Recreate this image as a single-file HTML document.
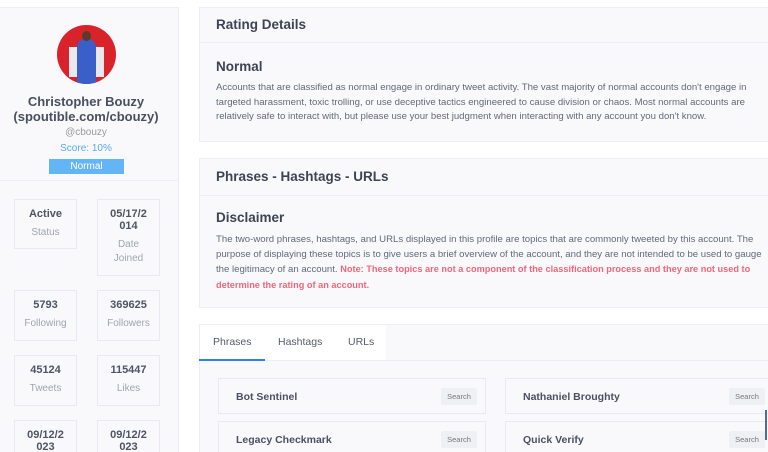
<!DOCTYPE html>
<html><head><meta charset="utf-8"><style>
*{margin:0;padding:0;box-sizing:border-box}
html,body{width:768px;height:452px;overflow:hidden}
body{background:#fff;font-family:"Liberation Sans",sans-serif;color:#5a5f6e}
#w{position:relative;width:768px;height:452px;overflow:hidden}
.a{position:absolute}
.side{left:0;top:7px;width:179px;height:445px;background:#f9f9fc;border-right:1px solid #eceef3;border-top:1px solid #eceef3}
.card{background:#f9f9fc;border:1px solid #eceef3;left:199px;width:569px;border-right:none}
.h{font-size:13.5px;color:#3e4454;font-weight:600;white-space:nowrap}
.p{font-size:9.6px;line-height:14.5px;white-space:nowrap;color:#646978}
.r{color:#f0677a;font-weight:bold;font-size:9.2px}
.stat{background:#f9f9fc;border:1px solid #e8eaf0;width:63px;text-align:center}
.stat b{display:block;font-size:11px;color:#4e5464;margin-top:8px;line-height:12px}
.stat span{display:block;font-size:10px;color:#a0a4b0;line-height:14px;margin-top:6px}
.item{background:#f9f9fc;border:1px solid #e8eaf0;height:36px}
.item .t{position:absolute;left:17px;top:12px;font-size:10.5px;font-weight:bold;color:#4a5060}
.item .s{position:absolute;right:8px;top:9px;width:36px;height:17px;background:#eef0f4;border-radius:2px;font-size:7.5px;color:#777;text-align:center;line-height:17px}
</style></head><body><div id="w">
<div class="a side"></div>
<div class="a" style="left:57px;top:25px;width:59px;height:59px;border-radius:50%;overflow:hidden;background:#d8232a">
 <div class="a" style="left:12px;top:22px;width:35px;height:30px;background:#e8e8ee"></div>
 <div class="a" style="left:20px;top:14px;width:19px;height:45px;background:#3a5fc8;border-radius:8px 8px 0 0"></div>
 <div class="a" style="left:25px;top:6px;width:9px;height:10px;background:#5a3a2a;border-radius:50%"></div>
</div>
<div class="a" style="left:0;width:172px;top:94px;text-align:center;font-size:13px;font-weight:bold;color:#4a4f5e;line-height:15px">Christopher Bouzy<br>(spoutible.com/cbouzy)</div>
<div class="a" style="left:0;width:172px;top:127px;text-align:center;font-size:10px;color:#999">@cbouzy</div>
<div class="a" style="left:0;width:172px;top:143px;text-align:center;font-size:10px;color:#5aa9f0">Score: 10%</div>
<div class="a" style="left:49px;top:159px;width:75px;height:15px;background:#64b5f6;color:#fff;font-size:10px;text-align:center;line-height:15px">Normal</div>
<div class="a" style="left:0;top:180px;width:179px;border-top:1px solid #eceef3"></div>
<div class="a stat" style="left:14px;top:199px;height:50px"><b>Active</b><span>Status</span></div>
<div class="a stat" style="left:97px;top:199px;height:77px"><b>05/17/2<br>014</b><span>Date<br>Joined</span></div>
<div class="a stat" style="left:14px;top:290px;height:51px"><b>5793</b><span>Following</span></div>
<div class="a stat" style="left:97px;top:290px;height:51px"><b>369625</b><span>Followers</span></div>
<div class="a stat" style="left:14px;top:355px;height:51px"><b>45124</b><span>Tweets</span></div>
<div class="a stat" style="left:97px;top:355px;height:51px"><b>115447</b><span>Likes</span></div>
<div class="a stat" style="left:14px;top:420px;height:32px;border-bottom:none"><b>09/12/2<br>023</b></div>
<div class="a stat" style="left:97px;top:420px;height:32px;border-bottom:none"><b>09/12/2<br>023</b></div>

<div class="a card" style="top:7px;height:135px"></div>
<div class="a h" style="left:216px;top:17px">Rating Details</div>
<div class="a" style="left:200px;top:42px;width:568px;border-top:1px solid #eceef3"></div>
<div class="a h" style="left:216px;top:59px">Normal</div>
<div class="a p" style="left:216px;top:81px">Accounts that are classified as normal engage in ordinary tweet activity. The vast majority of normal accounts don't engage in<br>targeted harassment, toxic trolling, or use deceptive tactics engineered to cause division or chaos. Most normal accounts are<br>relatively safe to interact with, but please use your best judgment when interacting with any account you don't know.</div>

<div class="a card" style="top:158px;height:150px"></div>
<div class="a h" style="left:216px;top:169px">Phrases - Hashtags - URLs</div>
<div class="a" style="left:200px;top:195px;width:568px;border-top:1px solid #eceef3"></div>
<div class="a h" style="left:216px;top:210px">Disclaimer</div>
<div class="a p" style="left:216px;top:233px">The two-word phrases, hashtags, and URLs displayed in this profile are topics that are commonly tweeted by this account. The<br>purpose of displaying these topics is to give users a brief overview of the account, and they are not intended to be used to gauge<br>the legitimacy of an account. <b class="r">Note: These topics are not a component of the classification process and they are not used to</b><br><b class="r">determine the rating of an account.</b></div>

<div class="a card" style="top:324px;height:128px;border-bottom:none"></div>
<div class="a" style="left:200px;top:325px;width:186px;height:36px;background:#fff"></div>
<div class="a" style="left:200px;top:360px;width:568px;border-top:1px solid #eceef3"></div>
<div class="a" style="left:199px;top:359px;width:66px;height:2px;background:#2f80ed"></div>
<div class="a" style="left:213px;top:336px;font-size:10.5px;color:#555b6a">Phrases</div>
<div class="a" style="left:278px;top:336px;font-size:10.5px;color:#555b6a">Hashtags</div>
<div class="a" style="left:348px;top:336px;font-size:10.5px;color:#555b6a">URLs</div>
<div class="a item" style="left:218px;top:378px;width:268px"><div class="t">Bot Sentinel</div><div class="s">Search</div></div>
<div class="a item" style="left:505px;top:378px;width:263px;border-right:none"><div class="t">Nathaniel Broughty</div><div class="s" style="right:3px">Search</div></div>
<div class="a item" style="left:218px;top:421px;width:268px;height:31px;border-bottom:none"><div class="t">Legacy Checkmark</div><div class="s">Search</div></div>
<div class="a item" style="left:505px;top:421px;width:263px;height:31px;border-right:none;border-bottom:none"><div class="t">Quick Verify</div><div class="s" style="right:3px">Search</div></div>
<div class="a" style="left:765px;top:410px;width:2px;height:30px;background:#5a6a8a"></div>
</div></body></html>
